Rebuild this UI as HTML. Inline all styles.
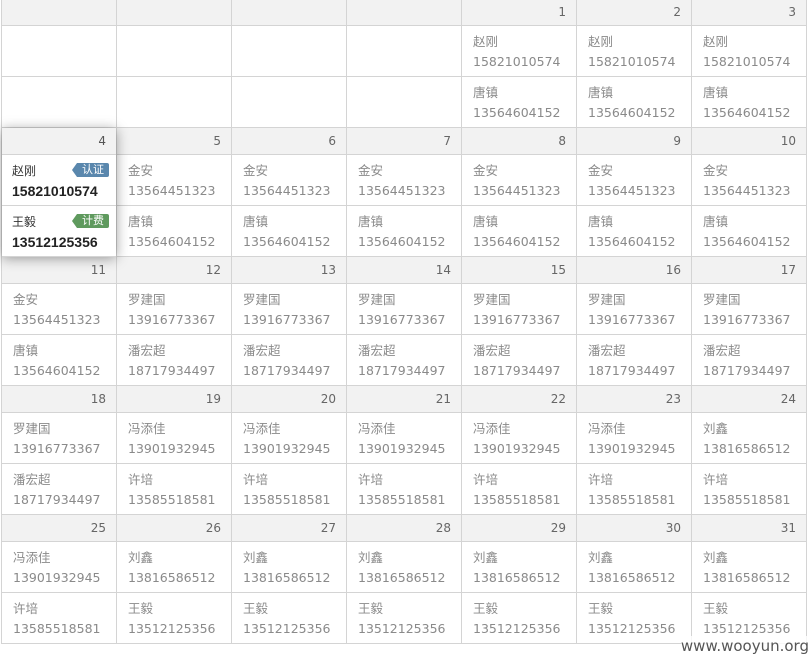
<!DOCTYPE html>
<html><head><meta charset="utf-8"><style>
body{margin:0;background:#fff;width:812px;height:656px;overflow:hidden;position:relative;font-family:"DejaVu Sans","Noto Sans CJK SC",sans-serif;}
table{position:absolute;left:1px;top:-2px;border-collapse:collapse;table-layout:fixed;}
td{border:1px solid #d4d4d4;width:114px;padding:0;vertical-align:top;font-size:12.5px;color:#8a8a8a;}
tr.h td{height:26px;background:#f2f2f2;text-align:right;color:#666;font-size:12px;line-height:26px;padding-right:10px;width:104px;}
tr.c td{height:50px;}
tr.c td div{padding:6px 0 0 11px;line-height:20px;}
.pop{position:absolute;left:2px;top:128px;width:114px;height:128px;background:#fff;box-shadow:0 2px 12px rgba(0,0,0,.4);z-index:2;}
.pop .hd{height:26px;background:#f2f2f2;border-bottom:1px solid #d4d4d4;text-align:right;padding-right:10px;line-height:26px;font-size:12px;color:#555;}
.pop .r{height:51px;border-bottom:1px solid #d4d4d4;position:relative;padding:6px 0 0 10px;box-sizing:border-box;line-height:20px;font-size:12px;color:#333;}
.pop .r b{font-family:"Liberation Sans",sans-serif;font-size:14px;color:#222;}
.tag{position:absolute;right:7px;top:8px;height:14px;width:32px;color:#fff;font-size:11px;line-height:14px;text-align:center;border-radius:0 2px 2px 0;}
.tag:before{content:"";position:absolute;left:-5px;top:0;border-top:7px solid transparent;border-bottom:7px solid transparent;border-right:5px solid;border-right-color:inherit;}
.bl{background:#5a87ad;border-color:#5a87ad;}
.gr{background:#5f9a5e;border-color:#5f9a5e;}
.wm{position:absolute;right:3px;bottom:0;font-family:"DejaVu Sans",sans-serif;font-size:15px;color:#555;background:rgba(255,255,255,.8);line-height:20px;z-index:3;}
</style></head><body>
<table>
<tr class="h"><td></td><td></td><td></td><td></td><td>1</td><td>2</td><td>3</td></tr>
<tr class="c"><td></td><td></td><td></td><td></td><td><div>赵刚<br>15821010574</div></td><td><div>赵刚<br>15821010574</div></td><td><div>赵刚<br>15821010574</div></td></tr>
<tr class="c"><td></td><td></td><td></td><td></td><td><div>唐镇<br>13564604152</div></td><td><div>唐镇<br>13564604152</div></td><td><div>唐镇<br>13564604152</div></td></tr>
<tr class="h"><td>4</td><td>5</td><td>6</td><td>7</td><td>8</td><td>9</td><td>10</td></tr>
<tr class="c"><td></td><td><div>金安<br>13564451323</div></td><td><div>金安<br>13564451323</div></td><td><div>金安<br>13564451323</div></td><td><div>金安<br>13564451323</div></td><td><div>金安<br>13564451323</div></td><td><div>金安<br>13564451323</div></td></tr>
<tr class="c"><td></td><td><div>唐镇<br>13564604152</div></td><td><div>唐镇<br>13564604152</div></td><td><div>唐镇<br>13564604152</div></td><td><div>唐镇<br>13564604152</div></td><td><div>唐镇<br>13564604152</div></td><td><div>唐镇<br>13564604152</div></td></tr>
<tr class="h"><td>11</td><td>12</td><td>13</td><td>14</td><td>15</td><td>16</td><td>17</td></tr>
<tr class="c"><td><div>金安<br>13564451323</div></td><td><div>罗建国<br>13916773367</div></td><td><div>罗建国<br>13916773367</div></td><td><div>罗建国<br>13916773367</div></td><td><div>罗建国<br>13916773367</div></td><td><div>罗建国<br>13916773367</div></td><td><div>罗建国<br>13916773367</div></td></tr>
<tr class="c"><td><div>唐镇<br>13564604152</div></td><td><div>潘宏超<br>18717934497</div></td><td><div>潘宏超<br>18717934497</div></td><td><div>潘宏超<br>18717934497</div></td><td><div>潘宏超<br>18717934497</div></td><td><div>潘宏超<br>18717934497</div></td><td><div>潘宏超<br>18717934497</div></td></tr>
<tr class="h"><td>18</td><td>19</td><td>20</td><td>21</td><td>22</td><td>23</td><td>24</td></tr>
<tr class="c"><td><div>罗建国<br>13916773367</div></td><td><div>冯添佳<br>13901932945</div></td><td><div>冯添佳<br>13901932945</div></td><td><div>冯添佳<br>13901932945</div></td><td><div>冯添佳<br>13901932945</div></td><td><div>冯添佳<br>13901932945</div></td><td><div>刘鑫<br>13816586512</div></td></tr>
<tr class="c"><td><div>潘宏超<br>18717934497</div></td><td><div>许培<br>13585518581</div></td><td><div>许培<br>13585518581</div></td><td><div>许培<br>13585518581</div></td><td><div>许培<br>13585518581</div></td><td><div>许培<br>13585518581</div></td><td><div>许培<br>13585518581</div></td></tr>
<tr class="h"><td>25</td><td>26</td><td>27</td><td>28</td><td>29</td><td>30</td><td>31</td></tr>
<tr class="c"><td><div>冯添佳<br>13901932945</div></td><td><div>刘鑫<br>13816586512</div></td><td><div>刘鑫<br>13816586512</div></td><td><div>刘鑫<br>13816586512</div></td><td><div>刘鑫<br>13816586512</div></td><td><div>刘鑫<br>13816586512</div></td><td><div>刘鑫<br>13816586512</div></td></tr>
<tr class="c"><td><div>许培<br>13585518581</div></td><td><div>王毅<br>13512125356</div></td><td><div>王毅<br>13512125356</div></td><td><div>王毅<br>13512125356</div></td><td><div>王毅<br>13512125356</div></td><td><div>王毅<br>13512125356</div></td><td><div>王毅<br>13512125356</div></td></tr>
</table>
<div class="pop">
<div class="hd">4</div>
<div class="r">赵刚<br><b>15821010574</b><span class="tag bl">认证</span></div>
<div class="r">王毅<br><b>13512125356</b><span class="tag gr">计费</span></div>
</div>
<div class="wm">www.wooyun.org</div>
</body></html>
